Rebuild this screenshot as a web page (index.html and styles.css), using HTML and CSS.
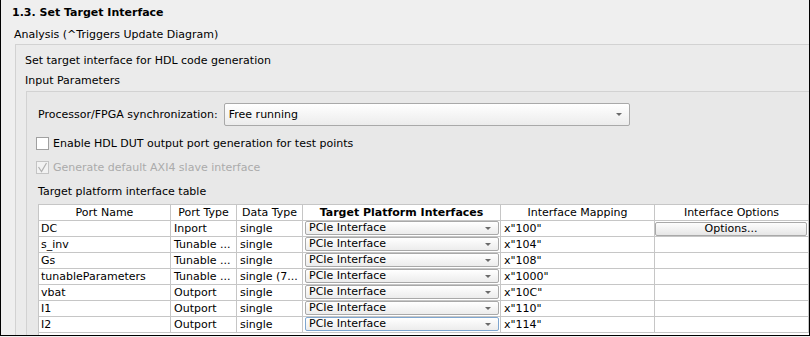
FILE: index.html
```html
<!DOCTYPE html>
<html lang="en">
<head>
    <meta charset="UTF-8">
    <title>Set Target Interface</title>
    <link rel="stylesheet" href="styles.css">
</head>
<body>
<div class="frame">
    <h2 class="title">1.3. Set Target Interface</h2>
    <div class="analysis">Analysis (^Triggers Update Diagram)</div>

    <div class="panel">
        <div class="line">Set target interface for HDL code generation</div>
        <div class="line params">Input Parameters</div>

        <div class="inner">
            <div class="sync">
                <span>Processor/FPGA synchronization:</span>
                <div class="combo big">Free running<span class="arrow"></span></div>
            </div>

            <label class="check"><span class="box"></span>Enable HDL DUT output port generation for test points</label>
            <label class="check off"><span class="box">
                <svg width="11" height="11" viewBox="0 0 11 11"><path d="M1.5 5 L4.5 9.5 L9.5 1" fill="none" stroke="#b0b0b0" stroke-width="1.2"/></svg>
            </span>Generate default AXI4 slave interface</label>

            <div class="caption">Target platform interface table</div>

            <div class="grid">
                <table>
                    <tr>
                        <th class="c1">Port Name</th>
                        <th class="c2">Port Type</th>
                        <th class="c3">Data Type</th>
                        <th class="c4 strong">Target Platform Interfaces</th>
                        <th class="c5">Interface Mapping</th>
                        <th class="c6">Interface Options</th>
                    </tr>
                    <tr>
                        <td class="first">DC</td><td>Inport</td><td>single</td>
                        <td class="sel"><div class="combo">PCIe Interface<span class="arrow"></span></div></td>
                        <td>x"100"</td>
                        <td class="sel"><div class="btn">Options...</div></td>
                    </tr>
                    <tr>
                        <td class="first">s_inv</td><td>Tunable ...</td><td>single</td>
                        <td class="sel"><div class="combo">PCIe Interface<span class="arrow"></span></div></td>
                        <td>x"104"</td><td></td>
                    </tr>
                    <tr>
                        <td class="first">Gs</td><td>Tunable ...</td><td>single</td>
                        <td class="sel"><div class="combo">PCIe Interface<span class="arrow"></span></div></td>
                        <td>x"108"</td><td></td>
                    </tr>
                    <tr>
                        <td class="first">tunableParameters</td><td>Tunable ...</td><td>single (7...</td>
                        <td class="sel"><div class="combo">PCIe Interface<span class="arrow"></span></div></td>
                        <td>x"1000"</td><td></td>
                    </tr>
                    <tr>
                        <td class="first">vbat</td><td>Outport</td><td>single</td>
                        <td class="sel"><div class="combo">PCIe Interface<span class="arrow"></span></div></td>
                        <td>x"10C"</td><td></td>
                    </tr>
                    <tr>
                        <td class="first">I1</td><td>Outport</td><td>single</td>
                        <td class="sel"><div class="combo">PCIe Interface<span class="arrow"></span></div></td>
                        <td>x"110"</td><td></td>
                    </tr>
                    <tr>
                        <td class="first">I2</td><td>Outport</td><td>single</td>
                        <td class="sel"><div class="combo focus">PCIe Interface<span class="arrow"></span></div></td>
                        <td>x"114"</td><td></td>
                    </tr>
                </table>
            </div>
        </div>
    </div>
</div>
</body>
</html>
```

FILE: styles.css
```css
html, body {
  margin: 0;
  padding: 0;
}

body {
  font-family: "DejaVu Sans", sans-serif;
  font-size: 11px;
  color: #000;
  background: #f0f0f0;
}

.frame {
  height: 336px;
  box-sizing: border-box;
  border: 1px solid #000;
  border-top: none;
  overflow: hidden;
  background: #efefef;
}

.title {
  margin: 0;
  padding: 6px 0 0 11px;
  font-size: 11px;
  line-height: 14px;
  font-weight: bold;
}

.analysis {
  margin-top: 8px;
  padding-left: 13px;
  line-height: 14px;
}

/* outer group box */
.panel {
  margin: 2px 0 0 14px;
  border-top: 1px solid #d2d2d2;
  border-left: 1px solid #d2d2d2;
  background: #ebebeb;
  padding: 9px 0 0 9px;
  width: 900px;
  height: 300px;
}

.line { line-height: 14px; }
.params { margin-top: 6px; }

/* input parameters box */
.inner {
  margin: 3px 0 0 1px;
  border-top: 1px solid #d2d2d2;
  border-left: 1px solid #d2d2d2;
  background: #e8e8e8;
  padding: 11px 0 0 11px;
  height: 260px;
}

.sync {
  display: flex;
  align-items: center;
  gap: 6px;
}

.combo {
  position: relative;
  box-sizing: border-box;
  height: 14px;
  line-height: 12px;
  padding-left: 3px;
  border: 1px solid #a9a9a9;
  border-radius: 2px;
  background: linear-gradient(#ffffff, #ececec);
}

.combo.big {
  width: 406px;
  height: 23px;
  line-height: 21px;
  padding-left: 4px;
}

.combo.focus { border-color: #7fa6cf; }

.arrow {
  position: absolute;
  right: 7px;
  top: 5px;
  width: 0;
  height: 0;
  border-left: 3px solid transparent;
  border-right: 3px solid transparent;
  border-top: 3px solid #6a6a6a;
}
.combo.big .arrow { right: 7px; top: 9px; }

.check {
  display: flex;
  align-items: center;
  gap: 4px;
  margin-top: 11px;
  margin-left: -2px;
  line-height: 13px;
}
.check.off { color: #ababab; }

.box {
  box-sizing: border-box;
  width: 13px;
  height: 13px;
  border: 1px solid #a0a0a0;
  background: #fff;
  display: flex;
  align-items: center;
  justify-content: center;
}
.off .box { border-color: #c4c4c4; background: #f2f2f2; }

.caption {
  margin-top: 11px;
  line-height: 14px;
}

.grid {
  margin-top: 5px;
  background: #fff;
  border-left: 1px solid #c6c6c6;
  border-top: 1px solid #c6c6c6;
  height: 140px;
  width: 771px;
  overflow: hidden;
}

table {
  border-collapse: separate;
  border-spacing: 0;
  table-layout: fixed;
  width: 770px;
}

th, td {
  box-sizing: border-box;
  height: 16px;
  padding: 0 0 0 3px;
  border-right: 1px solid #c6c6c6;
  border-bottom: 1px solid #c6c6c6;
  white-space: nowrap;
  overflow: hidden;
  line-height: 15px;
  font-weight: normal;
}

td.first { padding-left: 2px; }

th { text-align: center; padding: 0; }
th.strong { font-weight: bold; }

.c1 { width: 132px; }
.c2 { width: 66px; }
.c3 { width: 66px; }
.c4 { width: 198px; }
.c5 { width: 154px; }
.c6 { width: 154px; }

td.sel { padding: 0 1px 0 2px; vertical-align: top; }

.btn {
  box-sizing: border-box;
  height: 14px;
  margin-top: 1px;
  line-height: 12px;
  text-align: center;
  border: 1px solid #a9a9a9;
  border-radius: 2px;
  background: linear-gradient(#fdfdfd, #e6e6e6);
}
td.sel .btn { margin-left: -2px; }
```
